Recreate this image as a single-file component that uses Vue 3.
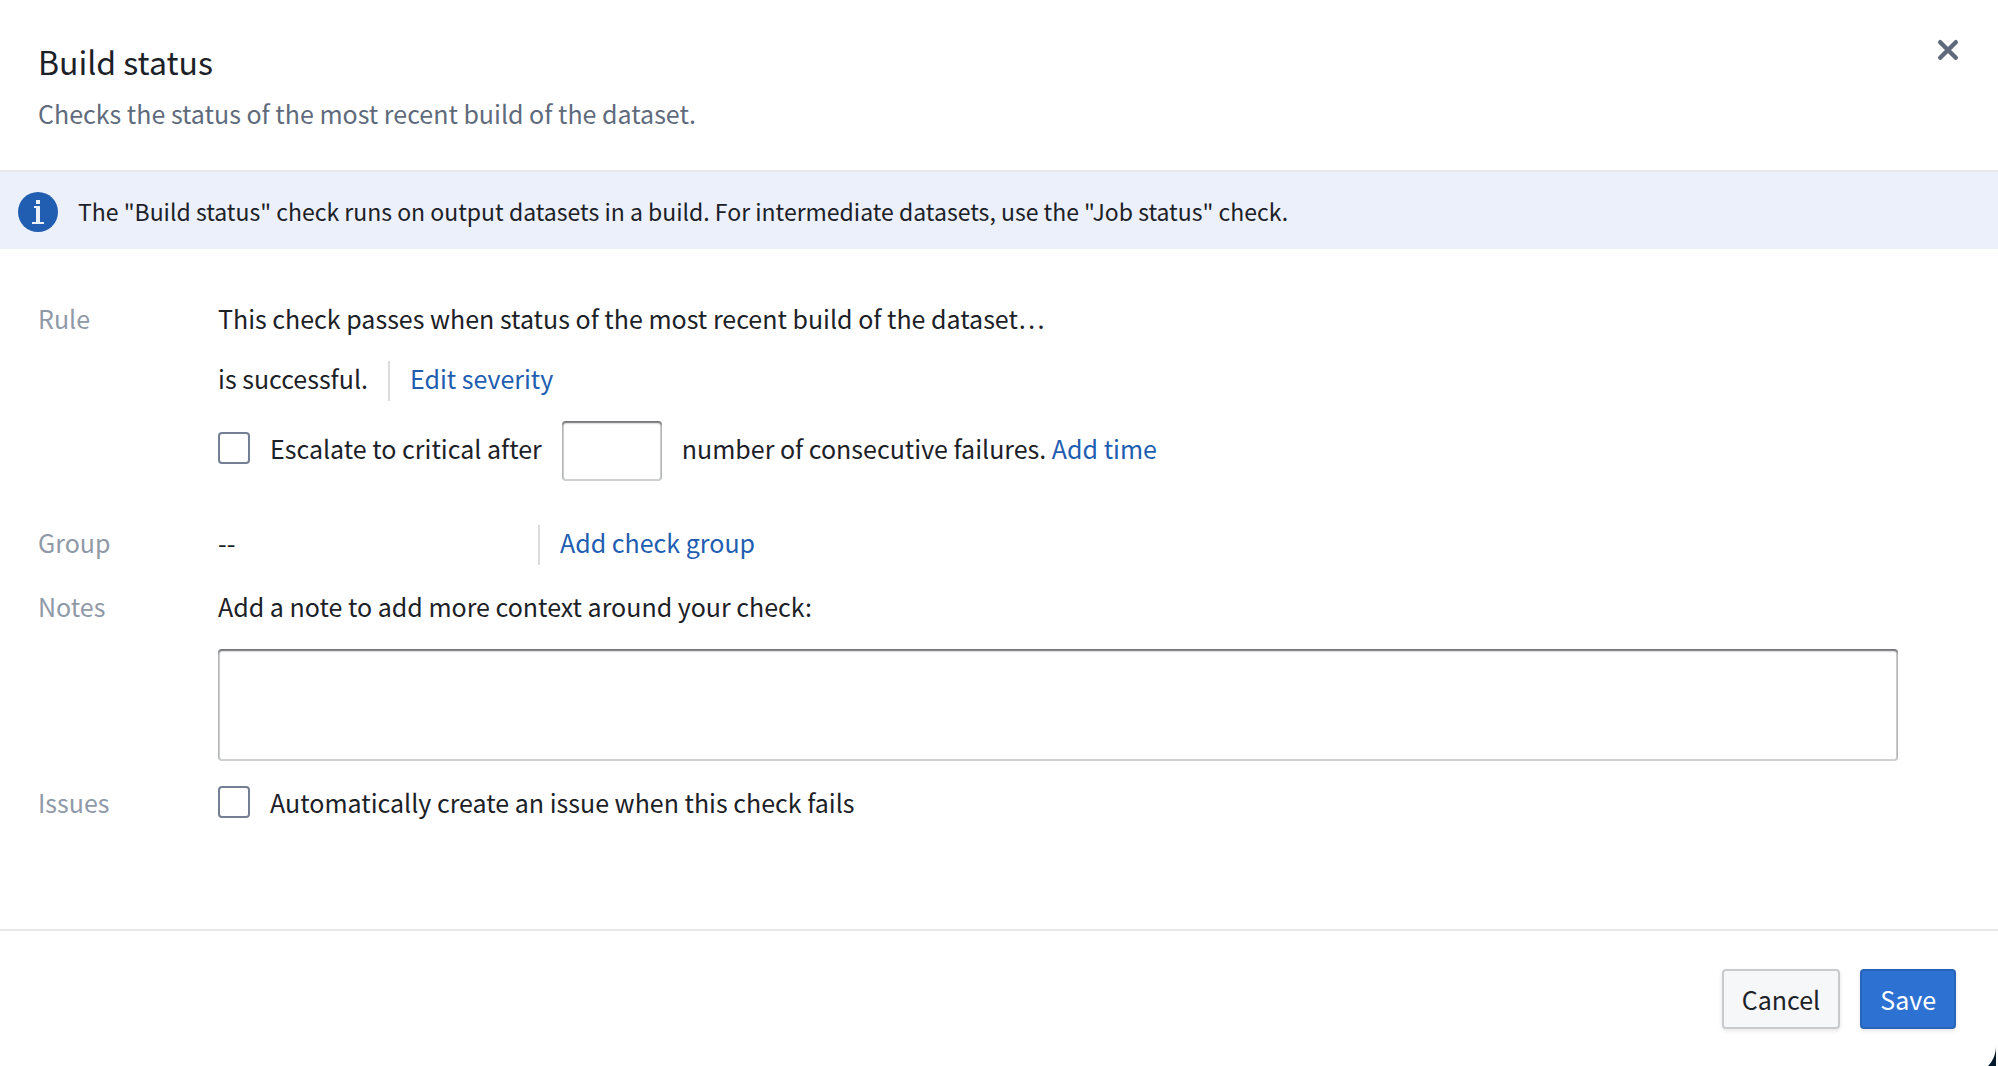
<script setup>
import { ref } from 'vue'

const escalate = ref(false)
const failures = ref('')
const note = ref('')
const createIssue = ref(false)
</script>

<template>
  <form class="dialog" @submit.prevent>
    <header class="header">
      <div>
        <h1>Build status</h1>
        <p class="subtitle">Checks the status of the most recent build of the dataset.</p>
      </div>
      <button class="close" type="button" aria-label="Close">
        <svg width="40" height="40" viewBox="0 0 40 40">
          <path d="M12.200 12.200 27.800 27.800M27.800 12.200 12.200 27.800" fill="none" stroke="#5f6b7c" stroke-width="4.4" stroke-linecap="round" />
        </svg>
      </button>
    </header>

    <div class="banner">
      <svg width="40" height="40" viewBox="0 0 40 40" aria-hidden="true">
        <circle cx="20" cy="20" r="20" fill="#215db0" />
        <path d="M18 8h4v4h-4zM16 14h6v16h4v2H14v-2h4V16h-2z" fill="#ebf0fb" />
      </svg>
      <span>The "Build status" check runs on output datasets in a build. For intermediate datasets, use the "Job status" check.</span>
    </div>

    <main class="body">
      <section class="row">
        <h2>Rule</h2>
        <div class="content">
          <p>This check passes when status of the most recent build of the dataset…</p>
          <div class="line severity">
            <span>is successful.</span>
            <span class="divider"></span>
            <a href="#">Edit severity</a>
          </div>
          <div class="line escalate">
            <label class="check"><input v-model="escalate" type="checkbox" />Escalate to critical after</label>
            <input v-model="failures" class="count" type="text" aria-label="Number of consecutive failures" />
            <span class="failures">number of consecutive failures. <a href="#">Add time</a></span>
          </div>
        </div>
      </section>

      <section class="row group">
        <h2>Group</h2>
        <div class="content line">
          <span class="group-name">--</span>
          <span class="divider"></span>
          <a href="#">Add check group</a>
        </div>
      </section>

      <section class="row">
        <h2>Notes</h2>
        <div class="content">
          <label class="note-label" for="note">Add a note to add more context around your check:</label>
          <textarea id="note" v-model="note"></textarea>
        </div>
      </section>

      <section class="row">
        <h2>Issues</h2>
        <div class="content">
          <label class="check"><input v-model="createIssue" type="checkbox" />Automatically create an issue when this check fails</label>
        </div>
      </section>
    </main>

    <footer class="footer">
      <button class="button" type="button">Cancel</button>
      <button class="button primary" type="submit">Save</button>
      <svg class="corner" width="8" height="20" viewBox="0 0 8 20" aria-hidden="true">
        <path d="M8 0C8 8 5 15 0 20H8Z" fill="#06182b" />
      </svg>
    </footer>
  </form>
</template>

<style>
body {
  background: #fff;
}
</style>

<style scoped>
.dialog {
  display: flex;
  flex-direction: column;
  min-height: 100vh;
  box-sizing: border-box;
  color: #1c2127;
  font: 25px/34px "Noto Sans CJK SC", "Open Sans", sans-serif;
}
h1, h2, p {
  margin: 0;
  font-weight: 400;
}
a {
  color: #215db0;
  text-decoration: none;
}
.header {
  display: flex;
  justify-content: space-between;
  align-items: flex-start;
  padding: 30px 30px 40px 38px;
  border-bottom: 2px solid #e5e7eb;
}
h1 {
  margin-bottom: 4px;
  font-size: 32px;
  line-height: 62px;
}
.subtitle {
  color: #5f6b7c;
}
.close {
  padding: 0;
  border: 0;
  background: none;
  line-height: 0;
}
.banner {
  display: flex;
  align-items: flex-start;
  gap: 20px;
  padding: 20px 18px 17px;
  background: #ebf0fb;
  font-size: 23px;
  line-height: 38px;
}
.body {
  flex: 1;
  padding: 52px 100px 0 38px;
}
.row {
  display: flex;
}
h2 {
  flex: 0 0 180px;
  color: #8f99a8;
  font-size: 25px;
}
.content {
  flex: 1;
}
.line {
  display: flex;
  align-items: flex-start;
}
.divider {
  width: 2px;
  height: 40px;
  margin: 0 20px;
  background: #dcdcdd;
}
.severity {
  margin: 26px 0 20px;
}
.escalate {
  gap: 20px;
}
.check {
  display: flex;
  align-items: center;
  gap: 20px;
}
.escalate .check,
.failures {
  padding-top: 10px;
}
input[type="checkbox"] {
  appearance: none;
  width: 32px;
  height: 32px;
  margin: 0;
  border: 2px solid #738091;
  border-radius: 4px;
  background: #fff;
}
.count,
textarea {
  box-sizing: border-box;
  padding: 0 20px;
  border: 0;
  border-radius: 4px;
  background: #fff;
  box-shadow: inset 0 0 0 2px rgba(17, 20, 24, 0.2), inset 0 2px 2px rgba(17, 20, 24, 0.5);
  color: inherit;
  font: inherit;
}
.count {
  width: 100px;
  height: 60px;
}
.group {
  margin: 44px 0 24px;
}
.group-name {
  width: 300px;
}
.note-label {
  display: block;
}
textarea {
  display: block;
  width: 100%;
  height: 112px;
  margin: 26px 0 24px;
  resize: none;
}
.footer {
  position: relative;
  display: flex;
  justify-content: flex-end;
  gap: 20px;
  padding: 38px 42px 37px;
  border-top: 2px solid #e8e8e8;
}
.button {
  height: 60px;
  padding: 0 18px;
  border: 2px solid #c8cacd;
  border-radius: 4px;
  background: #f6f7f9;
  box-shadow: 0 2px 4px rgba(17, 20, 24, 0.1);
  color: #1c2127;
  font: inherit;
}
.primary {
  border-color: #2864b8;
  background: #2d72d2;
  color: #fff;
}
.corner {
  position: absolute;
  right: 2px;
  bottom: 0;
}
</style>
